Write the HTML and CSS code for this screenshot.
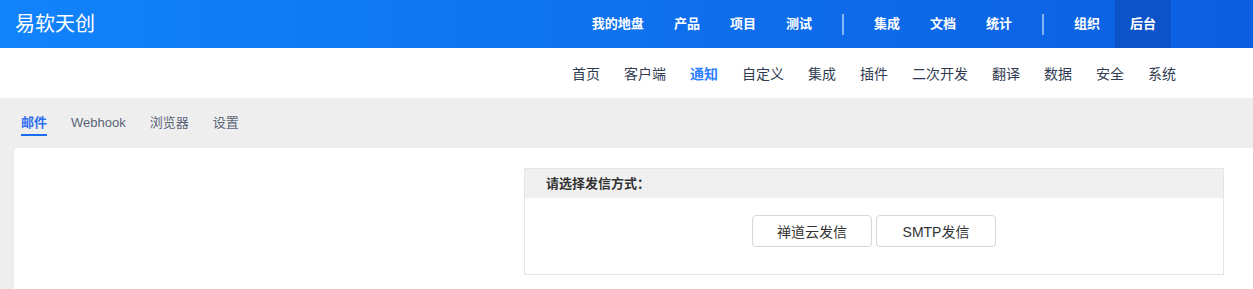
FILE: index.html
```html
<!DOCTYPE html>
<html lang="zh-CN">
<head>
    <meta charset="UTF-8">
    <meta name="viewport" content="width=device-width, initial-scale=1.0">
    <title>后台 - 通知 - 邮件</title>
    <link rel="stylesheet" href="styles.css">
</head>
<body>
    <header class="topbar">
        <div class="logo">易软天创</div>
        <nav class="mainnav">
            <a class="nav-item">我的地盘</a>
            <a class="nav-item">产品</a>
            <a class="nav-item">项目</a>
            <a class="nav-item">测试</a>
            <span class="nav-divider"></span>
            <a class="nav-item">集成</a>
            <a class="nav-item">文档</a>
            <a class="nav-item">统计</a>
            <span class="nav-divider"></span>
            <a class="nav-item">组织</a>
            <a class="nav-item active">后台</a>
        </nav>
    </header>

    <div class="subnav">
        <a class="sub-item">首页</a>
        <a class="sub-item">客户端</a>
        <a class="sub-item active">通知</a>
        <a class="sub-item">自定义</a>
        <a class="sub-item">集成</a>
        <a class="sub-item">插件</a>
        <a class="sub-item">二次开发</a>
        <a class="sub-item">翻译</a>
        <a class="sub-item">数据</a>
        <a class="sub-item">安全</a>
        <a class="sub-item">系统</a>
    </div>

    <div class="tabs">
        <a class="tab active">邮件</a>
        <a class="tab">Webhook</a>
        <a class="tab">浏览器</a>
        <a class="tab">设置</a>
    </div>

    <div class="panel">
        <div class="side"></div>
        <div class="main">
            <div class="card">
                <div class="card-header">请选择发信方式：</div>
                <div class="card-body">
                    <button class="btn">禅道云发信</button>
                    <button class="btn">SMTP发信</button>
                </div>
            </div>
        </div>
    </div>
</body>
</html>
```

FILE: styles.css
```css
body {
    margin: 0;
    font-family: "Liberation Sans", "Noto Sans CJK SC", sans-serif;
    background-color: #eee;
    color: #313c52;
}
a {
    text-decoration: none;
    cursor: pointer;
}

/* top header */
.topbar {
    height: 48px;
    display: flex;
    align-items: center;
    justify-content: space-between;
    background: linear-gradient(90deg, #1183fb 0%, #0b5fe0 100%);
    color: #fff;
}
.logo {
    padding-left: 15px;
    font-size: 20px;
    line-height: 48px;
}
.mainnav {
    display: flex;
    align-items: center;
    height: 48px;
    padding-right: 82px;
}
.nav-item {
    padding: 0 15px;
    line-height: 48px;
    font-size: 13px;
    font-weight: bold;
    color: #fff;
}
.nav-item.active {
    background: #0c52c8;
}
.nav-divider {
    width: 2px;
    height: 21px;
    margin: 0 15px;
    background: rgba(255, 255, 255, 0.5);
}

/* second level menu */
.subnav {
    height: 50px;
    display: flex;
    align-items: center;
    justify-content: flex-end;
    padding-right: 65px;
    background: #fff;
}
.sub-item {
    padding: 0 12px;
    font-size: 14px;
    color: #313c52;
}
.sub-item.active {
    color: #2e7fff;
    font-weight: bold;
}

/* tabs */
.tabs {
    height: 50px;
    display: flex;
    align-items: center;
    padding-left: 21px;
    gap: 24px;
}
.tab {
    position: relative;
    font-size: 13px;
    line-height: 20px;
    color: #5b6478;
}
.tab.active {
    color: #2e6ff0;
    font-weight: bold;
}
.tab.active::after {
    content: "";
    position: absolute;
    left: 0;
    right: 0;
    bottom: -3px;
    height: 2px;
    background: #1a6cf0;
}

/* content panel */
.panel {
    margin-left: 14px;
    background: #fff;
    border-radius: 4px 0 0 0;
    display: flex;
    padding: 20px 29px 14px 0;
}
.side {
    width: 510px;
    flex-shrink: 0;
}
.main {
    flex: 1;
}
.card {
    border: 1px solid #e5e5e5;
}
.card-header {
    height: 29px;
    line-height: 29px;
    padding-left: 21px;
    background: #f0f0f0;
    font-size: 13px;
    font-weight: bold;
    color: #333;
}
.card-body {
    padding: 17px 0 27px;
    text-align: center;
    font-size: 0;
}
.btn {
    width: 120px;
    height: 32px;
    margin: 0 2px;
    border: 1px solid #d3d7df;
    border-radius: 4px;
    background: #fff;
    font-family: inherit;
    font-size: 14px;
    color: #333;
    cursor: pointer;
}
```
